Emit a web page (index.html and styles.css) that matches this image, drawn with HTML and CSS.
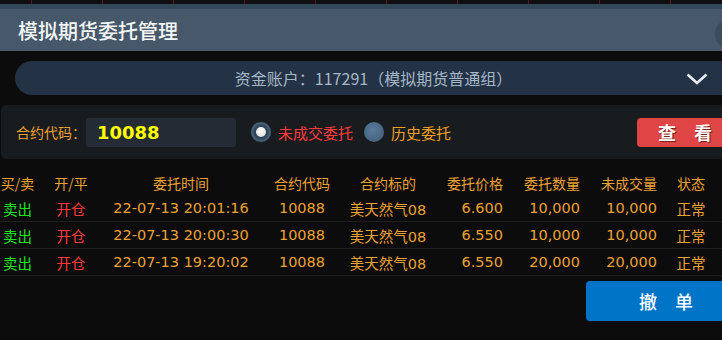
FILE: index.html
```html
<!DOCTYPE html>
<html>
    <head>
        <title>模拟期货委托管理</title>
        <link rel="stylesheet" href="styles.css">
    </head>
    <body>
        <div class="chart-strip"></div>
        <div class="header">
            <h1>模拟期货委托管理</h1>
            <span class="close"></span>
        </div>
        <div class="account">
            <span class="account-text">资金账户：117291（模拟期货普通组）</span>
            <svg class="chevron" width="22" height="12" viewBox="0 0 22 12">
                <polyline points="1.5,1.5 11,10 20.5,1.5" fill="none" stroke="#e6eef5" stroke-width="2.6"/>
            </svg>
        </div>
        <div class="filter">
            <label class="code-label">合约代码：</label>
            <div class="code-input">10088</div>
            <span class="radio checked"></span>
            <span class="radio-text active">未成交委托</span>
            <span class="radio history"></span>
            <span class="radio-text">历史委托</span>
            <button class="btn btn-query">查　看</button>
        </div>
        <div class="orders">
            <div class="row head">
                <span class="c">买/卖</span>
                <span class="c">开/平</span>
                <span class="c">委托时间</span>
                <span class="c">合约代码</span>
                <span class="c">合约标的</span>
                <span class="r">委托价格</span>
                <span class="r">委托数量</span>
                <span class="r">未成交量</span>
                <span class="c">状态</span>
            </div>
            <div class="row">
                <span class="c sell">卖出</span>
                <span class="c open">开仓</span>
                <span class="c">22-07-13 20:01:16</span>
                <span class="c">10088</span>
                <span class="c">美天然气08</span>
                <span class="r">6.600</span>
                <span class="r">10,000</span>
                <span class="r">10,000</span>
                <span class="c">正常</span>
            </div>
            <div class="row">
                <span class="c sell">卖出</span>
                <span class="c open">开仓</span>
                <span class="c">22-07-13 20:00:30</span>
                <span class="c">10088</span>
                <span class="c">美天然气08</span>
                <span class="r">6.550</span>
                <span class="r">10,000</span>
                <span class="r">10,000</span>
                <span class="c">正常</span>
            </div>
            <div class="row">
                <span class="c sell">卖出</span>
                <span class="c open">开仓</span>
                <span class="c">22-07-13 19:20:02</span>
                <span class="c">10088</span>
                <span class="c">美天然气08</span>
                <span class="r">6.550</span>
                <span class="r">20,000</span>
                <span class="r">20,000</span>
                <span class="c">正常</span>
            </div>
        </div>
        <div class="actions">
            <button class="btn btn-cancel">撤　单</button>
        </div>
    </body>
</html>
```

FILE: styles.css
```css
body {
    margin: 0;
    width: 722px;
    height: 340px;
    overflow: hidden;
    background: #0c0c0c;
    font-family: "DejaVu Sans", "Noto Sans CJK SC", sans-serif;
    color: #eba235;
}
.chart-strip {
    height: 4px;
    background: repeating-linear-gradient(90deg, #101010 0, #101010 31px, #5a1a1a 31px, #5a1a1a 32px, #101010 32px, #101010 71px);
}
.header {
    position: relative;
    height: 42px;
    border-top: 5px solid #33475a;
    background: #465869;
    display: flex;
    align-items: center;
    overflow: hidden;
}
h1 {
    margin: 0 0 0 18px;
    font-family: "Noto Sans CJK SC", sans-serif;
    font-size: 20px;
    font-weight: 500;
    color: #f4f6f8;
}
.close {
    position: absolute;
    left: 715px;
    top: 10px;
    width: 30px;
    height: 30px;
    border-radius: 50%;
    background: #3b4c5d;
}
.account {
    margin: 10px -10px 0 15px;
    height: 34px;
    border-radius: 17px 0 0 17px;
    background: #233244;
    display: flex;
    align-items: center;
    justify-content: center;
    position: relative;
}
.account-text {
    font-family: "Noto Sans CJK SC", sans-serif;
    font-size: 16px;
    color: #a5b6c7;
}
.chevron {
    position: absolute;
    left: 671px;
    top: 12px;
}
.filter {
    margin: 10px -10px 0 1px;
    height: 54px;
    border-radius: 6px;
    background: #191c1f;
    display: flex;
    align-items: center;
}
.code-label {
    margin-left: 15px;
    font-family: "Noto Sans CJK SC", sans-serif;
    font-size: 14px;
    color: #f0a030;
}
.code-input {
    margin-left: 0;
    width: 139px;
    height: 29px;
    padding-left: 11px;
    border-radius: 3px;
    background: #242b34;
    font-size: 18px;
    font-weight: bold;
    color: #ffff00;
    line-height: 29px;
}
.radio {
    width: 20px;
    height: 20px;
    border-radius: 50%;
    margin-left: 15px;
    background: radial-gradient(circle at 45% 40%, #5a7d9b, #3d5a75);
    display: flex;
    align-items: center;
    justify-content: center;
}
.radio.history {
    margin-left: 11px;
}
.radio.checked {
    background: radial-gradient(circle, #2f4458 45%, #56728c 75%, #3b5268);
}
.radio.checked::after {
    content: "";
    width: 10px;
    height: 10px;
    border-radius: 50%;
    background: radial-gradient(circle at 40% 35%, #ffffff, #d8d8d8);
}
.radio-text {
    margin-left: 7px;
    font-family: "Noto Sans CJK SC", sans-serif;
    font-size: 15px;
    color: #f0a020;
}
.radio-text.active {
    color: #ff3b3b;
}
.btn {
    border: none;
    border-radius: 4px;
    font-family: "Noto Sans CJK SC", sans-serif;
    font-size: 18px;
    font-weight: bold;
    color: #fff;
}
.btn-query {
    margin-left: auto;
    margin-right: -1px;
    width: 96px;
    height: 29px;
    background: #df4545;
    text-shadow: 1px 1px 0 #7a2020;
    padding: 0;
}
.orders {
    margin-top: 11px;
}
.row {
    display: grid;
    grid-template-columns: 35px 72px 148px 94px 78px 76px 77px 77px 68px;
    height: 26px;
    align-items: center;
    border-bottom: 1px solid #1e1e1e;
    font-size: 14.5px;
}
.row span {
    white-space: nowrap;
}
.row.head {
    height: 25px;
    border-bottom: none;
    font-size: 14px;
    font-family: "Noto Sans CJK SC", sans-serif;
}
.c {
    text-align: center;
}
.r {
    text-align: right;
}
.sell {
    color: #22e022;
    font-family: "Noto Sans CJK SC", sans-serif;
}
.open {
    color: #ff3b3b;
    font-family: "Noto Sans CJK SC", sans-serif;
}
.actions {
    display: flex;
    justify-content: flex-end;
    margin-top: 5px;
    margin-right: -24px;
}
.btn-cancel {
    width: 160px;
    height: 40px;
    background: #0075c8;
    font-weight: 500;
}
```
